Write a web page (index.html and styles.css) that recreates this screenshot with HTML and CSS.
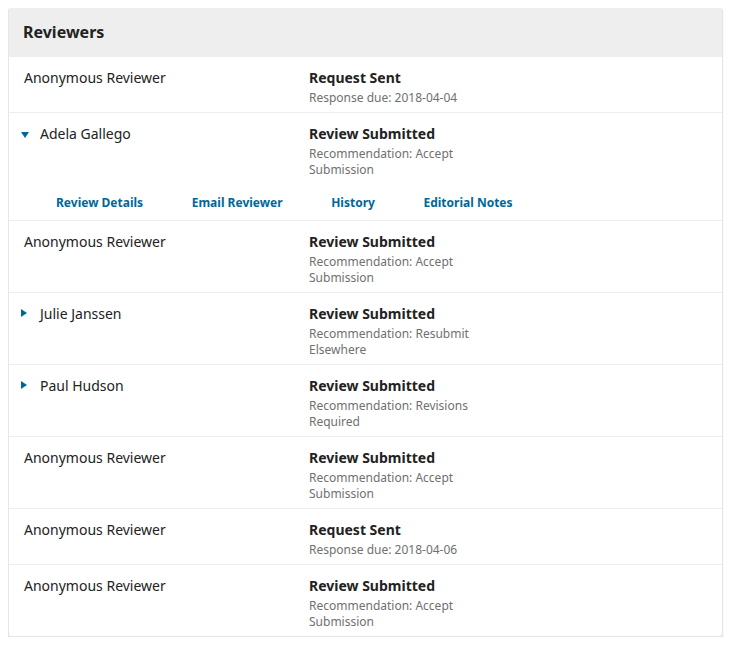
FILE: index.html
```html
<!DOCTYPE html>
<html lang="en">
<head>
    <meta charset="UTF-8">
    <title>Reviewers</title>
    <link rel="stylesheet" href="styles.css">
</head>
<body>
    <div class="panel">
        <div class="panel-header">Reviewers</div>

        <div class="row">
            <div class="name">Anonymous Reviewer</div>
            <div class="status">
                <div class="status-title">Request Sent</div>
                <div class="status-sub">Response due: 2018-04-04</div>
            </div>
        </div>

        <div class="row-group">
            <div class="row no-border">
                <div class="name has-toggle"><span class="toggle open"></span>Adela Gallego</div>
                <div class="status">
                    <div class="status-title">Review Submitted</div>
                    <div class="status-sub">Recommendation: Accept Submission</div>
                </div>
            </div>
            <div class="actions">
                <a href="#">Review Details</a>
                <a href="#">Email Reviewer</a>
                <a href="#">History</a>
                <a href="#">Editorial Notes</a>
            </div>
        </div>

        <div class="row">
            <div class="name">Anonymous Reviewer</div>
            <div class="status">
                <div class="status-title">Review Submitted</div>
                <div class="status-sub">Recommendation: Accept Submission</div>
            </div>
        </div>

        <div class="row">
            <div class="name has-toggle"><span class="toggle"></span>Julie Janssen</div>
            <div class="status">
                <div class="status-title">Review Submitted</div>
                <div class="status-sub">Recommendation: Resubmit Elsewhere</div>
            </div>
        </div>

        <div class="row">
            <div class="name has-toggle"><span class="toggle"></span>Paul Hudson</div>
            <div class="status">
                <div class="status-title">Review Submitted</div>
                <div class="status-sub">Recommendation: Revisions Required</div>
            </div>
        </div>

        <div class="row">
            <div class="name">Anonymous Reviewer</div>
            <div class="status">
                <div class="status-title">Review Submitted</div>
                <div class="status-sub">Recommendation: Accept Submission</div>
            </div>
        </div>

        <div class="row">
            <div class="name">Anonymous Reviewer</div>
            <div class="status">
                <div class="status-title">Request Sent</div>
                <div class="status-sub">Response due: 2018-04-06</div>
            </div>
        </div>

        <div class="row last">
            <div class="name">Anonymous Reviewer</div>
            <div class="status">
                <div class="status-title">Review Submitted</div>
                <div class="status-sub">Recommendation: Accept Submission</div>
            </div>
        </div>
    </div>
</body>
</html>
```

FILE: styles.css
```css
/* General */
body {
    font-family: 'Noto Sans', sans-serif;
    background-color: #fff;
    color: #222;
    margin: 8px;
}

/* Panel */
.panel {
    width: 713px;
    border: 1px solid #e6e6e6;
    border-top: none;
    border-radius: 3px;
    box-shadow: 0 1px 1px rgba(0, 0, 0, 0.2);
    background-color: #fff;
    overflow: hidden;
}

.panel-header {
    background-color: #eee;
    height: 48px;
    line-height: 48px;
    padding-left: 14px;
    font-size: 16px;
    font-weight: bold;
    border-bottom: 1px solid #eee;
}

/* Rows */
.row {
    display: flex;
    padding: 11px 16px 6px 15px;
    border-bottom: 1px solid #eee;
}

.row.no-border {
    border-bottom: none;
}

.row.last {
    border-bottom: none;
}

.row-group {
    border-bottom: 1px solid #eee;
}

.name {
    width: 285px;
    font-size: 14px;
    line-height: 20px;
    flex-shrink: 0;
}

.name.has-toggle {
    display: flex;
    align-items: center;
    height: 20px;
}

.toggle {
    width: 22px;
    height: 20px;
    margin-left: -6px;
    position: relative;
}

.toggle::before {
    content: "";
    position: absolute;
    left: 3px;
    top: 5px;
    border-top: 4px solid transparent;
    border-bottom: 4px solid transparent;
    border-left: 6px solid #006798;
}

.toggle.open::before {
    left: 3px;
    top: 8px;
    border-left: 4px solid transparent;
    border-right: 4px solid transparent;
    border-top: 6px solid #006798;
    border-bottom: none;
}

.status {
    width: 170px;
}

.status-title {
    font-size: 14px;
    font-weight: bold;
    line-height: 20px;
}

.status-sub {
    font-size: 12px;
    line-height: 16px;
    color: #707070;
    margin-top: 2px;
}

/* Actions row */
.actions {
    display: flex;
    gap: 48.6px;
    padding: 9px 0 7px 47px;
    font-size: 12px;
    line-height: 20px;
}

.actions a {
    color: #006798;
    font-weight: bold;
    text-decoration: none;
}
```
